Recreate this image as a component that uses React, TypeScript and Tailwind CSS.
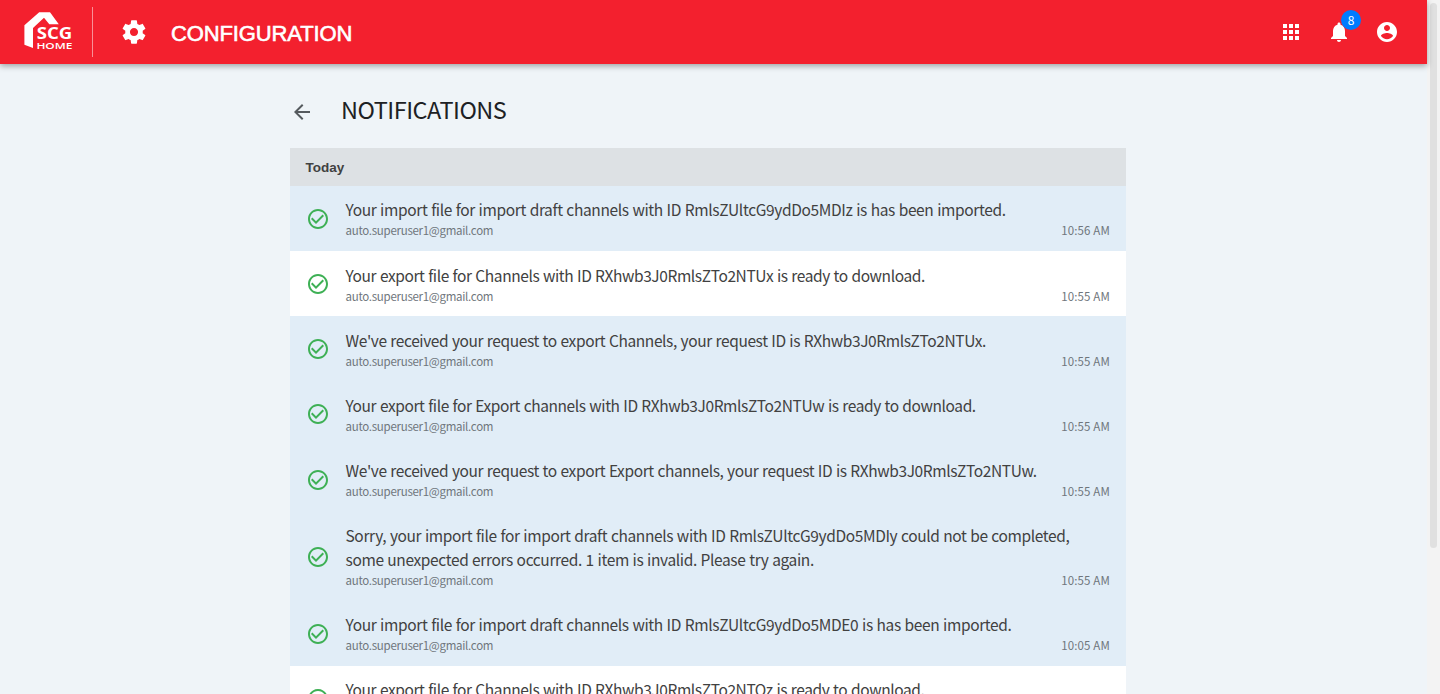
const CHECK =
  "M16.59 7.58L10 14.17l-3.59-3.58L5 12l5 5 8-8zM12 2C6.48 2 2 6.48 2 12s4.48 10 10 10 10-4.48 10-10S17.52 2 12 2zm0 18c-4.42 0-8-3.58-8-8s3.58-8 8-8 8 3.58 8 8-3.58 8-8 8z";
const GEAR =
  "M19.43 12.98c.04-.32.07-.64.07-.98s-.03-.66-.07-.98l2.11-1.65c.19-.15.24-.42.12-.64l-2-3.46c-.12-.22-.39-.3-.61-.22l-2.49 1c-.52-.4-1.08-.73-1.69-.98l-.38-2.65C14.46 2.18 14.25 2 14 2h-4c-.25 0-.46.18-.49.42l-.38 2.65c-.61.25-1.17.59-1.69.98l-2.49-1c-.23-.09-.49 0-.61.22l-2 3.46c-.13.22-.07.49.12.64l2.11 1.65c-.04.32-.07.65-.07.98s.03.66.07.98l-2.11 1.65c-.19.15-.24.42-.12.64l2 3.46c.12.22.39.3.61.22l2.49-1c.52.4 1.08.73 1.69.98l.38 2.65c.03.24.24.42.49.42h4c.25 0 .46-.18.49-.42l.38-2.65c.61-.25 1.17-.59 1.69-.98l2.49 1c.23.09.49 0 .61-.22l2-3.46c.12-.22.07-.49-.12-.64l-2.11-1.65zM12 15.5c-1.93 0-3.5-1.57-3.5-3.5s1.57-3.5 3.5-3.5 3.5 1.57 3.5 3.5-1.57 3.5-3.5 3.5z";
const APPS =
  "M4 8h4V4H4v4zm6 12h4v-4h-4v4zm-6 0h4v-4H4v4zm0-6h4v-4H4v4zm6 0h4v-4h-4v4zm6-10v4h4V4h-4zm-6 4h4V4h-4v4zm6 6h4v-4h-4v4zm0 6h4v-4h-4v4z";
const BELL =
  "M12 22c1.1 0 2-.9 2-2h-4c0 1.1.89 2 2 2zm6-6v-5c0-3.07-1.64-5.64-4.5-6.32V4c0-.83-.67-1.5-1.5-1.5s-1.5.67-1.5 1.5v.68C7.63 5.36 6 7.92 6 11v5l-2 2v1h16v-1l-2-2z";
const ACCOUNT =
  "M12 2C6.48 2 2 6.48 2 12s4.48 10 10 10 10-4.48 10-10S17.52 2 12 2zm0 3c1.66 0 3 1.34 3 3s-1.34 3-3 3-3-1.34-3-3 1.34-3 3-3zm0 14.2c-2.5 0-4.71-1.28-6-3.22.03-1.99 4-3.08 6-3.08 1.99 0 5.97 1.09 6 3.08-1.29 1.94-3.5 3.22-6 3.22z";
const BACK = "M20 11H7.83l5.59-5.59L12 4l-8 8 8 8 1.41-1.41L7.83 13H20v-2z";

function Icon({ d, className }: { d: string; className: string }) {
  return (
    <svg viewBox="0 0 24 24" fill="currentColor" className={`shrink-0 ${className}`}>
      <path d={d} />
    </svg>
  );
}

function Logo() {
  return (
    <svg viewBox="0 0 48 38" className="h-[38px] w-12 shrink-0 overflow-visible" fill="#fff">
      <path d="M.4 12.3L15.2-.8H26L34.8 11.3H25.3L20 4.7L9 15V35L.4 31.7Z" />
      <text x="12.8" y="25.8" fontFamily="Open Sans, sans-serif" fontWeight="700" fontSize="15.5" textLength="35.5" lengthAdjust="spacingAndGlyphs">SCG</text>
      <text x="12.4" y="35.6" fontFamily="Open Sans, sans-serif" fontWeight="600" fontSize="9" textLength="36" lengthAdjust="spacingAndGlyphs">HOME</text>
    </svg>
  );
}

type Item = { lines: string[]; time: string; unread: boolean; tracking: string };

const items: Item[] = [
  { lines: ["Your import file for import draft channels with ID RmlsZUltcG9ydDo5MDIz is has been imported."], time: "10:56 AM", unread: true, tracking: "tracking-[-0.36px]" },
  { lines: ["Your export file for Channels with ID RXhwb3J0RmlsZTo2NTUx is ready to download."], time: "10:55 AM", unread: false, tracking: "tracking-[-0.4px]" },
  { lines: ["We've received your request to export Channels, your request ID is RXhwb3J0RmlsZTo2NTUx."], time: "10:55 AM", unread: true, tracking: "tracking-[-0.39px]" },
  { lines: ["Your export file for Export channels with ID RXhwb3J0RmlsZTo2NTUw is ready to download."], time: "10:55 AM", unread: true, tracking: "tracking-[-0.405px]" },
  { lines: ["We've received your request to export Export channels, your request ID is RXhwb3J0RmlsZTo2NTUw."], time: "10:55 AM", unread: true, tracking: "tracking-[-0.39px]" },
  { lines: ["Sorry, your import file for import draft channels with ID RmlsZUltcG9ydDo5MDIy could not be completed,", "some unexpected errors occurred. 1 item is invalid. Please try again."], time: "10:55 AM", unread: true, tracking: "tracking-[-0.37px]" },
  { lines: ["Your import file for import draft channels with ID RmlsZUltcG9ydDo5MDE0 is has been imported."], time: "10:05 AM", unread: true, tracking: "tracking-[-0.36px]" },
  { lines: ["Your export file for Channels with ID RXhwb3J0RmlsZTo2NTQz is ready to download."], time: "10:04 AM", unread: false, tracking: "tracking-[-0.4px]" },
];

function Row({ item }: { item: Item }) {
  return (
    <li className={`flex items-center px-4 pt-[11.4px] pb-[9.8px] ${item.unread ? "bg-[#e1edf7]" : "bg-white"}`}>
      <Icon d={CHECK} className="-mt-px h-6 w-6 text-[#3eb055]" />
      <div className="ml-[15.5px] min-w-0 flex-1 whitespace-nowrap">
        {item.lines.map((line) => (
          <p key={line} className={`text-[15.5px] leading-6 [word-spacing:0.6px] text-[#414141] ${item.tracking}`}>{line}</p>
        ))}
        <div className="flex justify-between text-[11.5px] leading-[19.97px] text-[#6f767c]">
          <span className="tracking-[-0.28px]">auto.superuser1@gmail.com</span>
          <span className="tracking-[0.15px]">{item.time}</span>
        </div>
      </div>
    </li>
  );
}

export default function App() {
  return (
    <div className="flex h-[694px] overflow-hidden bg-[#eff4f8] font-['Noto_Sans_CJK_JP',sans-serif]">
      <div className="flex min-w-0 flex-1 flex-col">
        <header className="z-10 flex h-16 shrink-0 items-center bg-[#f3202e] pr-7 pl-6 text-white shadow-[0_2px_6px_rgba(0,0,0,0.35)]">
          <Logo />
          <div className="ml-5 h-[50px] w-px bg-white/50" />
          <Icon d={GEAR} className="ml-[27px] h-7 w-7" />
          <h1 className="ml-[23px] pt-0.5 font-['Liberation_Sans'] text-[22px] tracking-[-0.12px] [-webkit-text-stroke:0.6px_white]">CONFIGURATION</h1>
          <nav className="ml-auto flex items-center gap-6">
            <Icon d={APPS} className="h-6 w-6" />
            <div className="relative">
              <Icon d={BELL} className="h-6 w-6" />
              <span className="absolute -top-2.5 left-3.5 flex h-5 w-5 items-center justify-center rounded-full bg-[#007bff] text-xs">8</span>
            </div>
            <Icon d={ACCOUNT} className="h-6 w-6" />
          </nav>
        </header>
        <main className="ml-[290px] w-[836px]">
          <div className="flex h-[84px] items-center pt-3">
            <Icon d={BACK} className="h-6 w-6 text-[#555a5e]" />
            <h2 className="-mt-1 ml-[27px] text-[23.5px] tracking-[-0.5px] text-[#1d2124]">NOTIFICATIONS</h2>
          </div>
          <div className="flex h-[38px] items-center bg-[#dde1e4] px-[15.5px] pt-0.5 font-['Liberation_Sans'] text-[13.5px] font-bold text-[#414141]">Today</div>
          <ul>
            {items.map((item) => (
              <Row key={item.lines[0]} item={item} />
            ))}
          </ul>
        </main>
      </div>
      <div className="w-[13px] shrink-0 bg-[#f3f3f3] pt-[3px] pl-[3px]">
        <div className="h-[545px] w-[7px] rounded-full bg-[#e0e0e0]" />
      </div>
    </div>
  );
}
